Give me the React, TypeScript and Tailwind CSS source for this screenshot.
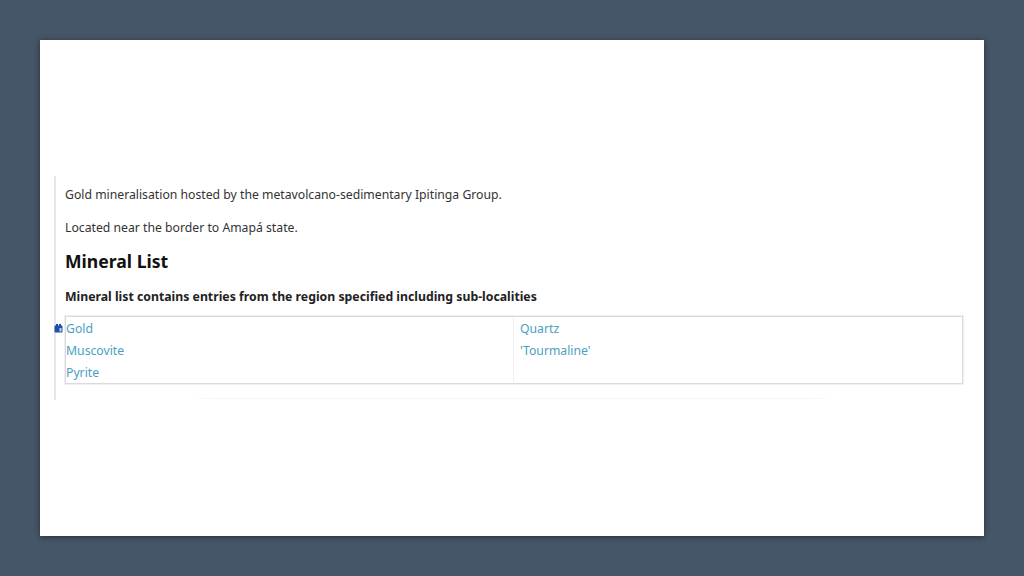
import React from "react";

const font = { fontFamily: '"Noto Sans", sans-serif' };

function MineralLink({ name }: { name: string }) {
  return <div className="h-[22px] leading-[22px] text-[#4a9fbf]">{name}</div>;
}

export default function App() {
  return (
    <div className="h-screen w-screen bg-[#475569] p-10 overflow-hidden" style={font}>
      <div className="h-[496px] w-[944px] bg-white shadow-[0_1px_6px_rgba(0,0,0,0.45)] pt-[136px] pl-[14px] pr-[21px]">
        <div className="border-l-2 border-[#e6e6e6] pl-[9px] h-[224px] text-[12.22px] text-[#333333]">
          <p className="pt-[10px] leading-[17px]">
            Gold mineralisation hosted by the metavolcano-sedimentary Ipitinga Group.
          </p>
          <p className="mt-[16px] leading-[17px]">Located near the border to Amapá state.</p>
          <h2 className="mt-[13px] text-[17.6px] leading-[24px] font-bold text-[#111111]">Mineral List</h2>
          <h3 className="mt-[15px] text-[12.27px] leading-[17px] font-bold text-[#222222]">
            Mineral list contains entries from the region specified including sub-localities
          </h3>
          <div className="relative mt-[11px] grid h-[68px] grid-cols-[448px_1fr] border border-[#dadada] shadow-[0_0_0_1px_#f0f0f0]">
            <svg
              className="absolute left-[-12px] top-[7px]"
              width="9"
              height="9"
              viewBox="0 0 9 9"
            >
              <rect x="0.5" y="1.5" width="8" height="7" rx="1" fill="#1f4fa8" />
              <rect x="2" y="0" width="2" height="2" fill="#1f4fa8" />
              <rect x="5" y="0" width="2" height="2" fill="#1f4fa8" />
              <rect x="5.5" y="4" width="2" height="3.5" fill="#c7d4ee" />
            </svg>
            <div className="border-r border-dotted border-[#e2e2e2] pt-px">
              <MineralLink name="Gold" />
              <MineralLink name="Muscovite" />
              <MineralLink name="Pyrite" />
            </div>
            <div className="pl-[6px] pt-px">
              <MineralLink name="Quartz" />
              <MineralLink name="'Tourmaline'" />
            </div>
          </div>
          <div className="mt-[14px] ml-[125px] h-px w-[645px] bg-[linear-gradient(to_right,#ffffff,#f5f5f5_4%,#f5f5f5_96%,#ffffff)]" />
        </div>
      </div>
    </div>
  );
}
